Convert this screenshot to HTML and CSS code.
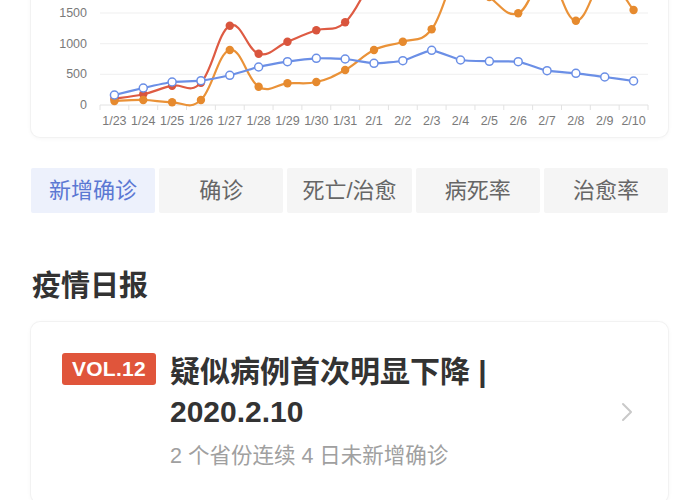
FILE: index.html
```html
<!DOCTYPE html>
<html lang="zh-CN">
<head>
<meta charset="utf-8">
<title>疫情日报</title>
<link rel="stylesheet" href="styles.css">
</head>
<body>
<div class="page">
  <section class="chart-card">
    <svg class="chart" viewBox="31 -40 637 177" width="637" height="177">
      <g class="grid">
        <line x1="100" x2="648" y1="13" y2="13"/>
        <line x1="100" x2="648" y1="43.7" y2="43.7"/>
        <line x1="100" x2="648" y1="74.3" y2="74.3"/>
      </g>
      <g class="axis">
        <line x1="100" x2="648" y1="105" y2="105"/>
        <line x1="100" x2="100" y1="105" y2="110"/>
        <line x1="128.84" x2="128.84" y1="105" y2="110"/>
        <line x1="157.68" x2="157.68" y1="105" y2="110"/>
        <line x1="186.53" x2="186.53" y1="105" y2="110"/>
        <line x1="215.37" x2="215.37" y1="105" y2="110"/>
        <line x1="244.21" x2="244.21" y1="105" y2="110"/>
        <line x1="273.05" x2="273.05" y1="105" y2="110"/>
        <line x1="301.89" x2="301.89" y1="105" y2="110"/>
        <line x1="330.74" x2="330.74" y1="105" y2="110"/>
        <line x1="359.58" x2="359.58" y1="105" y2="110"/>
        <line x1="388.42" x2="388.42" y1="105" y2="110"/>
        <line x1="417.26" x2="417.26" y1="105" y2="110"/>
        <line x1="446.1" x2="446.1" y1="105" y2="110"/>
        <line x1="474.95" x2="474.95" y1="105" y2="110"/>
        <line x1="503.79" x2="503.79" y1="105" y2="110"/>
        <line x1="532.63" x2="532.63" y1="105" y2="110"/>
        <line x1="561.47" x2="561.47" y1="105" y2="110"/>
        <line x1="590.31" x2="590.31" y1="105" y2="110"/>
        <line x1="619.16" x2="619.16" y1="105" y2="110"/>
        <line x1="648" x2="648" y1="105" y2="110"/>
      </g>
      <g class="ylabels">
        <text x="87" y="13">1500</text>
        <text x="87" y="43.7">1000</text>
        <text x="87" y="74.3">500</text>
        <text x="87" y="105">0</text>
      </g>
      <g class="xlabels">
        <text x="114.42" y="121">1/23</text>
        <text x="143.26" y="121">1/24</text>
        <text x="172.11" y="121">1/25</text>
        <text x="200.95" y="121">1/26</text>
        <text x="229.79" y="121">1/27</text>
        <text x="258.63" y="121">1/28</text>
        <text x="287.47" y="121">1/29</text>
        <text x="316.32" y="121">1/30</text>
        <text x="345.16" y="121">1/31</text>
        <text x="374" y="121">2/1</text>
        <text x="402.84" y="121">2/2</text>
        <text x="431.68" y="121">2/3</text>
        <text x="460.53" y="121">2/4</text>
        <text x="489.37" y="121">2/5</text>
        <text x="518.21" y="121">2/6</text>
        <text x="547.05" y="121">2/7</text>
        <text x="575.89" y="121">2/8</text>
        <text x="604.74" y="121">2/9</text>
        <text x="633.58" y="121">2/10</text>
      </g>
      <path id="line-red" class="line line-red" d=""/>
      <path id="line-orange" class="line line-orange" d=""/>
      <path id="line-blue" class="line line-blue" d=""/>
      <g id="dots-red" class="dots-red"></g>
      <g id="dots-orange" class="dots-orange"></g>
      <g id="dots-blue" class="dots-blue"></g>
    </svg>
  </section>

  <nav class="tabs">
    <div class="tab tab-active">新增确诊</div>
    <div class="tab">确诊</div>
    <div class="tab">死亡/治愈</div>
    <div class="tab">病死率</div>
    <div class="tab">治愈率</div>
  </nav>

  <h2 class="section-title">疫情日报</h2>

  <section class="report-card">
    <div class="report-row">
      <span class="badge">VOL.12</span>
      <div class="report-body">
        <div class="report-title">疑似病例首次明显下降 | 2020.2.10</div>
        <div class="report-sub">2 个省份连续 4 日未新增确诊</div>
      </div>
      <svg class="chevron" width="12" height="20" viewBox="0 0 12 20">
        <polyline points="2,2 10,10 2,18"/>
      </svg>
    </div>
  </section>
</div>
<script src="script.js"></script>
</body>
</html>
```

FILE: styles.css
```css
html, body {
  margin: 0;
  padding: 0;
  background: #ffffff;
}
body {
  font-family: "Liberation Sans", "Noto Sans CJK SC", sans-serif;
  color: #333333;
  width: 700px;
  height: 500px;
  overflow: hidden;
}
.page {
  padding: 0 32px 0 31px;
}
.chart-card {
  margin-top: -40px;
  height: 177px;
  background: #ffffff;
  border-radius: 9px;
  box-shadow: 0 0 0 1px #f2f2f2, 0 1px 5px rgba(0, 0, 0, 0.05);
  overflow: hidden;
}
.chart {
  display: block;
}
.grid line {
  stroke: #efefef;
  stroke-width: 1;
}
.axis line {
  stroke: #e2e2e2;
  stroke-width: 1;
}
.ylabels text {
  font-family: "Liberation Sans", sans-serif;
  font-size: 12.5px;
  fill: #7a7a7a;
  text-anchor: end;
  dominant-baseline: central;
}
.xlabels text {
  font-family: "Liberation Sans", sans-serif;
  font-size: 12.5px;
  fill: #7a7a7a;
  text-anchor: middle;
  dominant-baseline: central;
}
.line {
  fill: none;
  stroke-width: 2.2;
  stroke-linejoin: round;
  stroke-linecap: round;
}
.line-red { stroke: #de5b43; }
.line-orange { stroke: #ea9238; }
.line-blue { stroke: #6b8fe6; }
.dots-red circle { fill: #d9553d; }
.dots-orange circle { fill: #e68a2e; }
.dots-blue circle { fill: #ffffff; stroke: #6b8fe6; stroke-width: 1.5; }

.tabs {
  display: flex;
  gap: 4px;
  margin-top: 31px;
}
.tab {
  flex: 1;
  height: 45px;
  line-height: 45px;
  text-align: center;
  font-size: 22px;
  color: #666666;
  background: #f5f5f5;
  border-radius: 2px;
}
.tab-active {
  background: #edf1fc;
  color: #5b78d3;
}

.section-title {
  margin: 53px 0 0 1px;
  font-size: 29px;
  line-height: 40px;
  font-weight: 600;
  color: #333333;
}

.report-card {
  margin-top: 16px;
  background: #ffffff;
  border-radius: 9px;
  box-shadow: 0 0 0 1px #f2f2f2, 0 1px 5px rgba(0, 0, 0, 0.05);
  padding: 30px 35px 32px 31px;
}
.report-row {
  display: flex;
  align-items: center;
}
.badge {
  align-self: flex-start;
  margin-top: 1px;
  height: 32px;
  line-height: 32px;
  padding: 0 8px;
  width: 78px;
  text-align: center;
  background: #e0553b;
  color: #ffffff;
  font-weight: 700;
  font-size: 21px;
  letter-spacing: 0.3px;
  border-radius: 3px;
  flex: none;
}
.report-body {
  flex: 1;
  margin-left: 14px;
  min-width: 0;
}
.report-title {
  font-size: 30px;
  line-height: 40px;
  font-weight: 600;
  color: #333333;
  padding-right: 20px;
}
.report-sub {
  margin-top: 9px;
  font-size: 21.5px;
  line-height: 30px;
  color: #a0a0a0;
}
.chevron {
  flex: none;
  display: block;
}
.chevron polyline {
  fill: none;
  stroke: #c9c9c9;
  stroke-width: 2;
  stroke-linecap: round;
  stroke-linejoin: round;
}
```

FILE: script.js
```js
(function () {
  var NS = "http://www.w3.org/2000/svg";
  function x(i) { return 100 + (i + 0.5) * 28.842; }
  var blue = [95, 88, 82, 80.7, 75.3, 67, 61.7, 58.3, 59, 63.3, 60.7, 50.3, 60, 61.3, 61.7, 70.7, 73.3, 77, 81];
  var red = [98.7, 94.3, 85.7, 82.7, 25.7, 53.7, 41.7, 30.3, 22.3, -22, -50, -70, -60, -80, -70, -90, -80, -90, -100];
  var orange = [101, 100, 102.3, 100, 50, 86.7, 83.3, 82, 70, 50, 41.7, 29.3, -30, -3, 13.3, -24, 20.7, -20, 10];

  function pts(ys) { return ys.map(function (y, i) { return [x(i), y]; }); }

  function smooth(p, s) {
    var d = "M" + p[0][0].toFixed(2) + "," + p[0][1].toFixed(2);
    for (var i = 0; i < p.length - 1; i++) {
      var p0 = p[i - 1] || p[i], p1 = p[i], p2 = p[i + 1], p3 = p[i + 2] || p2;
      var c1x = p1[0] + (p2[0] - p0[0]) * s, c1y = p1[1] + (p2[1] - p0[1]) * s;
      var c2x = p2[0] - (p3[0] - p1[0]) * s, c2y = p2[1] - (p3[1] - p1[1]) * s;
      d += " C" + c1x.toFixed(2) + "," + c1y.toFixed(2) + " " + c2x.toFixed(2) + "," + c2y.toFixed(2) + " " + p2[0].toFixed(2) + "," + p2[1].toFixed(2);
    }
    return d;
  }
  function straight(p) {
    return p.map(function (q, i) { return (i ? "L" : "M") + q[0].toFixed(2) + "," + q[1].toFixed(2); }).join(" ");
  }
  function dots(id, p, r) {
    var g = document.getElementById(id);
    p.forEach(function (q) {
      var c = document.createElementNS(NS, "circle");
      c.setAttribute("cx", q[0]);
      c.setAttribute("cy", q[1]);
      c.setAttribute("r", r);
      g.appendChild(c);
    });
  }
  var pr = pts(red), po = pts(orange), pb = pts(blue);
  document.getElementById("line-red").setAttribute("d", smooth(pr, 0.2));
  document.getElementById("line-orange").setAttribute("d", smooth(po, 0.2));
  document.getElementById("line-blue").setAttribute("d", smooth(pb, 0.08));
  dots("dots-red", pr, 4.2);
  dots("dots-orange", po, 4.2);
  dots("dots-blue", pb, 4);
})();
```
